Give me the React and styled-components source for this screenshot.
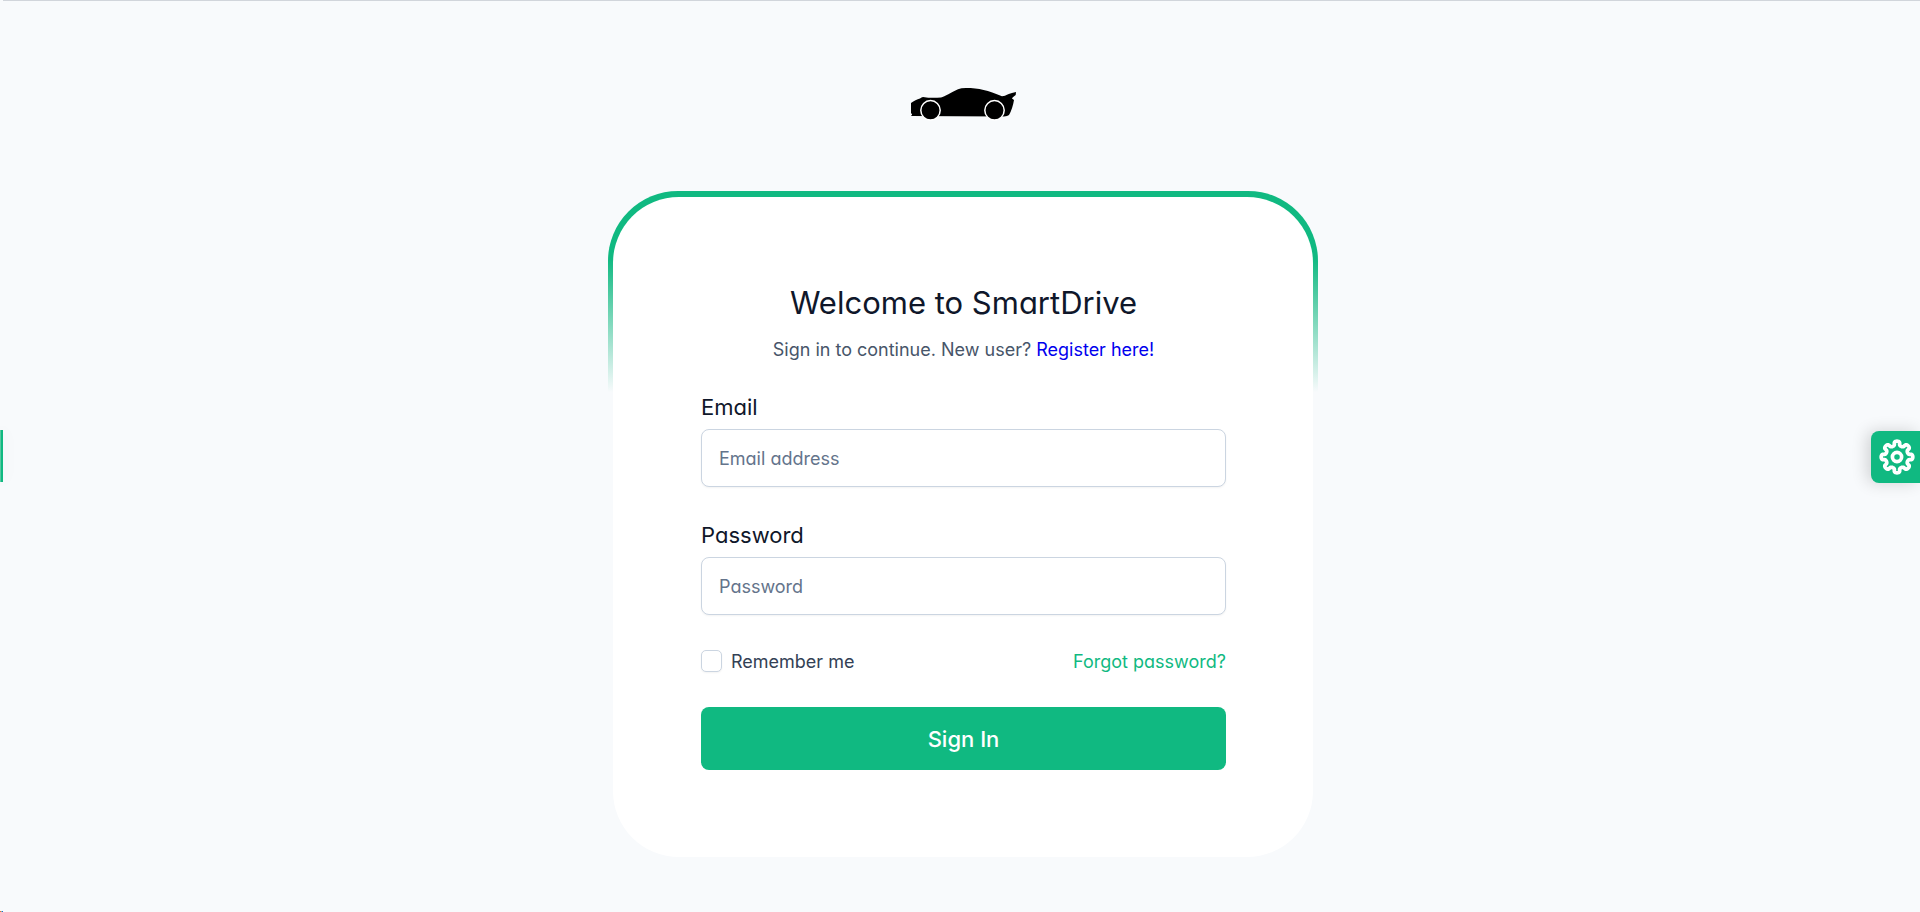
import React from "react";
import styled, { createGlobalStyle } from "styled-components";

const GlobalStyle = createGlobalStyle`
  *, *::before, *::after { box-sizing: border-box; }
  body {
    margin: 0;
    background: #f8fafc;
    color: #0f172a;
    font-family: Inter, "Liberation Sans", sans-serif;
    font-size: 18px;
    font-feature-settings: "cv11";
  }
  input, button { font: inherit; font-feature-settings: inherit; }
  h1, p { margin: 0; }
`;

const Page = styled.div`
  display: flex;
  min-height: 100vh;
`;

const Rail = styled.div`
  flex: none;
  width: 3px;
  display: flex;
  flex-direction: column;
  justify-content: center;
  background: linear-gradient(90deg, #f0653a 1px, #7cc4a0 1px 2px, #2563d8 2px) bottom / 3px 1px no-repeat;
`;

const RailMark = styled.div`
  height: 52px;
  background: linear-gradient(90deg, #58c9a2 1px, #10b981 1px);
  box-shadow: 0 0 16px rgba(15, 23, 42, 0.08);
`;

const Main = styled.main`
  flex: 1;
  display: flex;
  flex-direction: column;
  align-items: center;
  padding: 87px 0 50px 3px;
  border-top: 1px solid #d1d5db;
`;

const Logo = styled.svg`
  flex: none;
  width: 108px;
  height: 34px;
  margin-bottom: 69px;
`;

const Frame = styled.div`
  width: 100%;
  max-width: 710px;
  padding: 6px 5px 5px;
  border-radius: 70px;
  background: linear-gradient(180deg, #10b981 10%, rgba(16, 185, 129, 0) 30%);
`;

const Card = styled.form`
  display: flex;
  flex-direction: column;
  padding: 87px 87px 87px 88px;
  border-radius: 66px;
  background: #fff;
`;

const Header = styled.header`
  display: flex;
  flex-direction: column;
  align-items: center;
  gap: 17px;
  margin-bottom: 34px;
`;

const Title = styled.h1`
  font-size: 31px;
  font-weight: 400;
  line-height: 38px;
`;

const Subtitle = styled.p`
  color: #475569;
  line-height: 21px;
`;

const RegisterLink = styled.a`
  color: #0000ee;
  text-decoration: none;
`;

const Field = styled.div`
  display: flex;
  flex-direction: column;
  gap: 8px;
  margin-bottom: 35px;
`;

const Label = styled.label`
  font-size: 22px;
  line-height: 27px;
`;

const TextInput = styled.input`
  width: 100%;
  height: 58px;
  padding: 0 17px;
  border: 1px solid #cbd5e1;
  border-radius: 8px;
  background: #fff;
  color: #334155;
  box-shadow: 0 1px 2px rgba(18, 18, 23, 0.05);
  &::placeholder { color: #64748b; opacity: 1; }
`;

const Options = styled.div`
  display: flex;
  align-items: center;
  justify-content: space-between;
  height: 22px;
  margin-bottom: 35px;
`;

const Remember = styled.div`
  display: flex;
  align-items: center;
  gap: 9px;
  color: #334155;
`;

const Checkbox = styled.input`
  appearance: none;
  width: 21px;
  height: 22px;
  margin: 0;
  border: 1px solid #cbd5e1;
  border-radius: 5px;
  background: #fff;
  box-shadow: 0 1px 2px rgba(18, 18, 23, 0.05);
  &:checked { background: #10b981; border-color: #10b981; }
`;

const ForgotLink = styled.a`
  color: #10b981;
  text-decoration: none;
`;

const SubmitButton = styled.button`
  height: 63px;
  border: 0;
  border-radius: 8px;
  background: #10b981;
  color: #fff;
  font-size: 22px;
  font-weight: 500;
  cursor: pointer;
`;

const SettingsButton = styled.button`
  position: fixed;
  top: 50%;
  right: 0;
  transform: translateY(-25px);
  display: flex;
  align-items: center;
  width: 49px;
  height: 52px;
  padding: 0 0 0 8px;
  border: 0;
  border-radius: 8px 0 0 8px;
  background: #10b981;
  color: #fff;
  box-shadow: -4px 0 16px rgba(0, 0, 0, 0.16);
  cursor: pointer;
`;

const cogPath = (() => {
  const points = [];
  for (let i = 0; i < 240; i += 1) {
    const t = (i / 240) * Math.PI * 2;
    const r = 13.6 + 2.2 * Math.cos(8 * t);
    const a = t + 0.055 * Math.sin(16 * t);
    points.push(`${(18 + r * Math.sin(a)).toFixed(2)} ${(18 - r * Math.cos(a)).toFixed(2)}`);
  }
  return `M${points.join("L")}Z`;
})();

function CogIcon() {
  return (
    <svg width="36" height="36" viewBox="0 0 36 36" fill="none" stroke="currentColor" strokeWidth="3.7" strokeLinejoin="round" aria-hidden="true">
      <path d={cogPath} />
      <circle cx="18" cy="18" r="4.6" />
    </svg>
  );
}

function CarLogo() {
  return (
    <Logo viewBox="-2 0 108 34" role="img" aria-label="SmartDrive">
      <path d="M0 15C3 12.500 6 11.500 9 10.500C10 9.500 11 9 12 9C18 10 24 10 30 9.500C34 8.500 40 4.500 47 1.200Q50 0 55 0C68 0 77 2.500 91 8.200L94 7.800Q96 6 105 4L104.700 7Q101 9.500 101 10.500L103 12Q101.500 21 98 27Q96.500 28.300 93 28.500L0 28L1.200 26.500L0 25Z" fill="#000" />
      <circle cx="19.500" cy="22.300" r="9.700" fill="#000" stroke="#fff" strokeWidth="1.500" />
      <circle cx="83.500" cy="22.300" r="9.700" fill="#000" stroke="#fff" strokeWidth="1.500" />
    </Logo>
  );
}

export default function App() {
  return (
    <>
      <GlobalStyle />
      <Page>
        <Rail>
          <RailMark />
        </Rail>
        <Main>
          <CarLogo />
          <Frame>
            <Card onSubmit={(event) => event.preventDefault()}>
              <Header>
                <Title>Welcome to SmartDrive</Title>
                <Subtitle>
                  Sign in to continue. New user? <RegisterLink href="#register">Register here!</RegisterLink>
                </Subtitle>
              </Header>
              <Field>
                <Label htmlFor="email">Email</Label>
                <TextInput id="email" type="text" placeholder="Email address" />
              </Field>
              <Field>
                <Label htmlFor="password">Password</Label>
                <TextInput id="password" type="password" placeholder="Password" />
              </Field>
              <Options>
                <Remember>
                  <Checkbox id="remember" type="checkbox" />
                  <label htmlFor="remember">Remember me</label>
                </Remember>
                <ForgotLink href="#forgot">Forgot password?</ForgotLink>
              </Options>
              <SubmitButton type="submit">Sign In</SubmitButton>
            </Card>
          </Frame>
        </Main>
      </Page>
      <SettingsButton type="button" aria-label="Settings">
        <CogIcon />
      </SettingsButton>
    </>
  );
}
